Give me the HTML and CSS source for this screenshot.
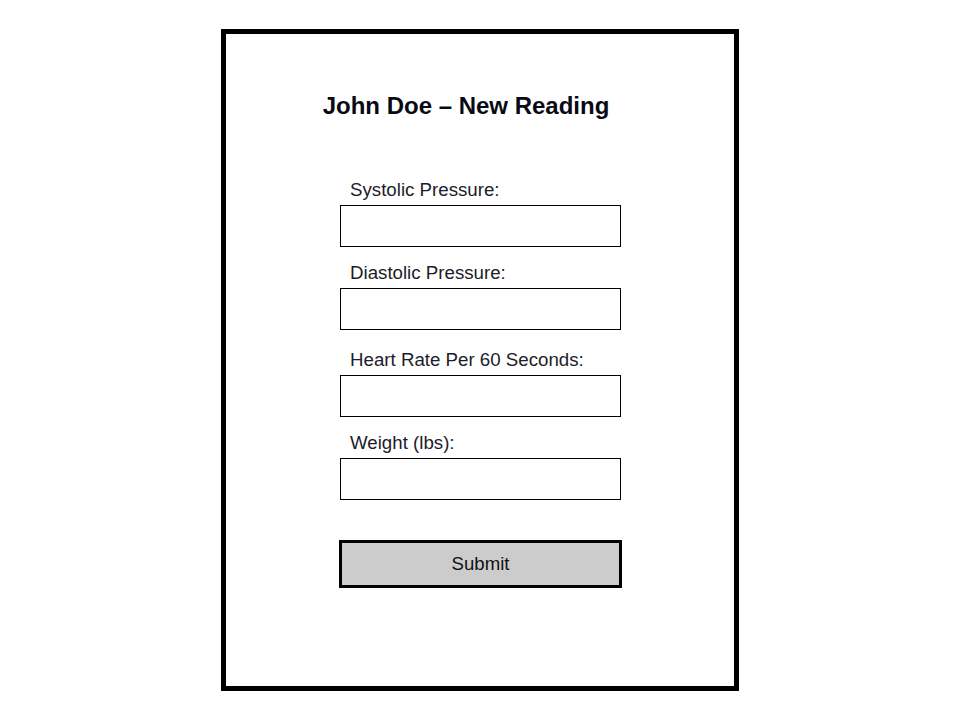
FILE: index.html
```html
<!DOCTYPE html>
<html>
<head>
<meta charset="utf-8">
<link rel="stylesheet" href="styles.css">
</head>
<body>
<div class="frame">
  <h1 class="title">John Doe – New Reading</h1>
  <form class="form">
    <div class="field">
      <label class="label">Systolic Pressure:</label>
      <input class="input" type="text">
    </div>
    <div class="field">
      <label class="label">Diastolic Pressure:</label>
      <input class="input" type="text">
    </div>
    <div class="field field-wide">
      <label class="label">Heart Rate Per 60 Seconds:</label>
      <input class="input" type="text">
    </div>
    <div class="field">
      <label class="label">Weight (lbs):</label>
      <input class="input" type="text">
    </div>
    <button class="submit" type="button">Submit</button>
  </form>
</div>
</body>
</html>
```
FILE: styles.css
```css
html, body {
  margin: 0;
  padding: 0;
  background: #fff;
}
body {
  font-family: "Liberation Sans", Arial, sans-serif;
  width: 960px;
  height: 720px;
}
.frame {
  box-sizing: border-box;
  width: 518px;
  height: 662px;
  margin: 29px 0 0 221px;
  border: 5px solid #000;
  display: flex;
  flex-direction: column;
  align-items: center;
}
.title {
  margin: 58px 0 0 0;
  padding-right: 28px;
  font-size: 24px;
  font-weight: bold;
  line-height: 28px;
  color: #0a0a14;
}
.form {
  margin-top: 60px;
  margin-left: 2px;
  display: flex;
  flex-direction: column;
  width: 282px;
}
.field {
  display: flex;
  flex-direction: column;
  margin-bottom: 16px;
}
.field-wide {
  margin-top: 4px;
}
.label {
  font-size: 18.7px;
  line-height: 20px;
  color: #1c1c2a;
  padding-left: 10px;
  margin-bottom: 5px;
}
.input {
  box-sizing: border-box;
  width: 281px;
  height: 42px;
  border: 1px solid #000;
  margin: 0;
  padding: 0;
  background: #fff;
}
.submit {
  box-sizing: border-box;
  margin-top: 24px;
  margin-left: -1px;
  width: 283px;
  height: 48px;
  border: 3px solid #000;
  background: #cccccc;
  font-family: "Liberation Sans", Arial, sans-serif;
  font-size: 18.6px;
  color: #111;
  padding: 0;
}
```
